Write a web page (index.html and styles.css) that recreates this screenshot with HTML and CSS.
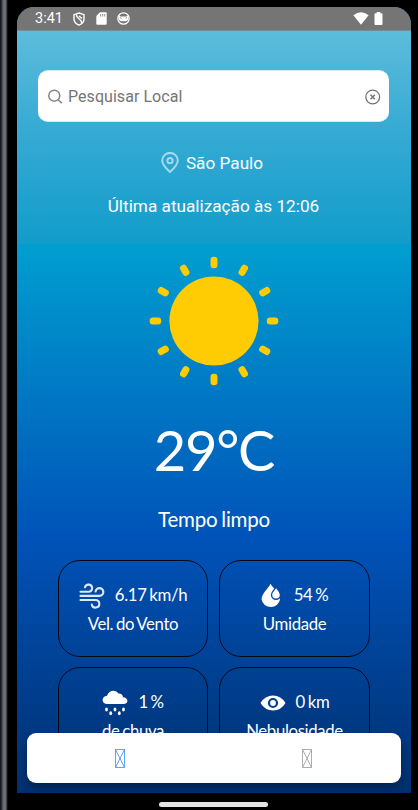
FILE: index.html
```html
<!DOCTYPE html>
<html lang="pt-BR">
<head>
<meta charset="utf-8">
<title>Clima</title>
<link rel="stylesheet" href="styles.css">
</head>
<body>
<div class="device">
  <main class="screen">
    <div class="status">
      <span class="clock">3:41</span>
      <svg class="s-shield" width="12" height="14" viewBox="0 0 12 14" fill="none" stroke="#fff" stroke-width="1.4"><path d="M6 1 11 2.7V7c0 3-2 5-5 6.200C3 12 1 10 1 7V2.700z"/><path d="M3.300 2.500c0 4.500 5.400 4 5.400 8.500M6 4l3 2.500"/></svg>
      <svg class="s-card" width="11" height="13" viewBox="0 0 11 13"><path fill="#fff" d="M4 .3h5.700q1 0 1 1v10.400q0 1-1 1H1.300q-1 0-1-1V4z"/><path stroke="#757575" stroke-width=".8" d="M4.700 2v2.500M6.700 2v2.500M8.700 2v2.500"/></svg>
      <svg class="s-face" width="13" height="13" viewBox="0 0 13 13"><circle cx="6.500" cy="6.500" r="5.700" fill="none" stroke="#fff" stroke-width="1.200"/><path fill="#fff" d="M1.800 3.200 3.500 4.500h6l1.700-1.300.3 3.800c-.5 1.500-2 2.300-5 2.300s-4.500-.8-5-2.300z"/><path stroke="#757575" stroke-width=".8" d="M3 5.500l1.500.8M10 5.500l-1.500.8"/></svg>
      <span class="grow"></span>
      <svg width="16" height="13" viewBox="0 0 16 13"><path fill="#fff" d="M.4 3.300Q8-2.600 15.600 3.300L8 12.700z"/></svg>
      <svg class="s-batt" width="9" height="13" viewBox="0 0 9 13"><path fill="#fff" d="M2.700 0h3.600v1.200H7.500q1 0 1 1V12q0 1-1 1h-6q-1 0-1-1V2.200q0-1 1-1h1.200z"/></svg>
    </div>
    <header class="top">
      <div class="search">
        <svg width="15" height="15" viewBox="0 0 15 15" fill="none" stroke="#858585" stroke-width="1.500"><circle cx="6.300" cy="6.700" r="5.500"/><path d="m10.300 10.700 3.400 3.400"/></svg>
        <span class="placeholder">Pesquisar Local</span>
        <svg width="16" height="16" viewBox="0 0 16 16" fill="none" stroke="#757575" stroke-width="1.300"><circle cx="7.700" cy="8" r="6.900"/><path stroke-width="1.500" d="m5.500 5.800 4.400 4.400m0-4.400-4.400 4.400"/></svg>
      </div>
      <div class="place">
        <svg width="18" height="22" viewBox="0 0 18 22" fill="none" stroke="#a5d9ec" stroke-width="2"><path d="M9 20C4 15.300 1.200 12 1.200 8.400a7.800 7.500 0 0 1 15.600 0C16.800 12 14 15.300 9 20z"/><circle cx="9" cy="8.700" r="2.600"/></svg>
        <span>São Paulo</span>
      </div>
      <div class="updated">Última atualização às 12:06</div>
    </header>
    <section class="now">
      <svg class="sun" width="130" height="130" viewBox="-65 -65 130 130" fill="#ffcc03">
        <defs><rect id="ray" x="-3.500" y="-64.300" width="7" height="11.500" rx="3.200"/></defs>
        <circle r="44.600"/>
        <use href="#ray"/><use href="#ray" transform="rotate(30)"/><use href="#ray" transform="rotate(60)"/><use href="#ray" transform="rotate(90)"/><use href="#ray" transform="rotate(120)"/><use href="#ray" transform="rotate(150)"/><use href="#ray" transform="rotate(180)"/><use href="#ray" transform="rotate(210)"/><use href="#ray" transform="rotate(240)"/><use href="#ray" transform="rotate(270)"/><use href="#ray" transform="rotate(300)"/><use href="#ray" transform="rotate(330)"/>
      </svg>
      <div class="temp">29°C</div>
      <div class="desc">Tempo limpo</div>
    </section>
    <section class="cards">
      <div class="card">
        <div class="line wind">
          <svg width="26" height="26" viewBox="0 0 26 26" fill="none" stroke="#dce9f8" stroke-width="2.100" stroke-linecap="round"><path d="M1.500 8.800H9.500a3.600 3.600 0 1 0-3.500-4.500M1.500 12.900h19a3.900 3.900 0 1 0-3.900-4.500M1.500 17H16.500a3.800 3.800 0 1 1-3.700 4.500"/></svg>
          <span>6.17 km/h</span>
        </div>
        <div class="label">Vel. do Vento</div>
      </div>
      <div class="card">
        <div class="line drop">
          <svg width="20" height="26" viewBox="0 0 20 26"><path fill="#fff" d="M9.500.8C12 5 19 11 19 16.500a9.300 8.800 0 0 1-18.400 0C.6 10.500 7 6 9.500.8z"/><path fill="#fff" stroke="#004daf" stroke-width="1.400" d="M15 4.200c1.500 2.200 4.500 4.300 4.500 7.500a4.500 4.500 0 0 1-9 0c0-3 3-5 4.500-7.500z"/></svg>
          <span>54 %</span>
        </div>
        <div class="label">Umidade</div>
      </div>
      <div class="card">
        <div class="line rain">
          <svg width="26" height="26" viewBox="0 0 26 26" fill="#fff"><path d="M5.500 14C-1 14-1 6.500 5 5.700 7-.3 14-.5 16.300 3.500c3-.2 4.500 1.500 4.700 3.800 5.500.2 6 6.700.5 6.700z"/><g><ellipse cx="4.500" cy="19.500" rx="1.400" ry="2"/><ellipse cx="13" cy="19.500" rx="1.400" ry="2"/><ellipse cx="21.500" cy="19.500" rx="1.400" ry="2"/><ellipse cx="8.700" cy="23.300" rx="1.400" ry="2"/><ellipse cx="17.300" cy="23.300" rx="1.400" ry="2"/></g></svg>
          <span>1 %</span>
        </div>
        <div class="label">de chuva</div>
      </div>
      <div class="card">
        <div class="line eye">
          <svg width="26" height="16" viewBox="0 0 26 16"><path fill="#fff" d="M.5 8Q5 .5 13 .5T25.500 8Q21 15.500 13 15.500T.5 8z"/><circle cx="13" cy="8" r="4" fill="#fff" stroke="#00428f" stroke-width="2.200"/></svg>
          <span>0 km</span>
        </div>
        <div class="label">Nebulosidade</div>
      </div>
    </section>
    <nav class="tabs">
      <a class="tab active"><svg width="10" height="19" viewBox="0 0 10 19" fill="none" stroke="currentColor" stroke-width=".8"><path d="M.5.500h9v18h-9zL9.500 18.500M9.500.500l-9 18"/></svg></a>
      <a class="tab"><svg width="10" height="19" viewBox="0 0 10 19" fill="none" stroke="currentColor" stroke-width=".8"><path d="M.5.500h9v18h-9zL9.500 18.500M9.500.500l-9 18"/></svg></a>
    </nav>
  </main>
  <div class="home"></div>
</div>
</body>
</html>
```
FILE: styles.css
```css
* { box-sizing: border-box; }
body { margin: 0; background: #000; font-family: Roboto, sans-serif; color: #fff; overflow: hidden; }
svg { display: block; flex: none; }
.device {
  width: 418px; height: 810px; padding: 7px 7px 0 17px; overflow: hidden;
  background: linear-gradient(90deg, #17181b 0 1px, #42454b 2px, #73767e 4px, #62656c 6px, #202124 7px, #000 8px);
}
.screen {
  position: relative; height: 786px; overflow: hidden; border-radius: 17px 17px 0 0;
  background: linear-gradient(180deg, #009fd0 237px, #0052b8 534px, #003070 786px);
}
.status { display: flex; align-items: center; height: 24px; padding: 0 28px 0 18px; background: #757575; border-bottom: 1px solid #6f8e99; }
.clock { width: 38px; font-size: 14.5px; line-height: 24px; padding-top: 1px; }
.s-card { margin-left: 11px; }
.s-face { margin-left: 10px; }
.grow { flex: 1; }
.s-batt { margin-left: 5px; }
.top { height: 213px; padding: 39px 22px 0 21px; background: linear-gradient(180deg, #5dbcdb, #37abd4 45%, #129cca); }
.search { display: flex; align-items: center; height: 52px; padding: 1px 8px 0 10px; border-radius: 10px; background: #fff; border: 1px solid #d2ebf5; border-width: 1px 0; }
.placeholder { flex: 1; margin-left: 5px; font-size: 16px; letter-spacing: .05px; color: #757575; }
.place { display: flex; align-items: center; justify-content: center; height: 22px; gap: 7px; margin: 30px 3px 0 0; font-size: 17.2px; }
.updated { margin-top: 20px; text-align: center; font-size: 17.2px; line-height: 24px; }
.now { display: flex; flex-direction: column; align-items: center; height: 316px; padding-top: 12px; font-family: Lato, sans-serif; }
.temp { margin-top: 29px; font-size: 56px; line-height: 70px; letter-spacing: -1.3px; }
.desc { margin-top: 19px; font-size: 20.5px; line-height: 30px; letter-spacing: -.2px; word-spacing: -1.2px; }
.cards { display: grid; grid-template-columns: 150px 151px; grid-auto-rows: 97px; gap: 10px 11px; padding-left: 41px; font-family: Lato, sans-serif; font-size: 16.8px; letter-spacing: -.35px; word-spacing: -1.2px; }
.card { border: 1px solid #000818; border-radius: 22px; padding-top: 20px; }
.line { display: flex; align-items: center; justify-content: center; height: 30px; gap: 10px; }
.line span { padding-bottom: 3px; }
.drop { gap: 13px; }
.label { text-align: center; line-height: 26px; }
.tabs { position: absolute; left: 9.500px; right: 10px; bottom: 10px; height: 50px; display: flex; border-radius: 9px; background: #fff; box-shadow: 0 5px 10px rgba(0, 0, 0, .28); }
.tab { flex: 1; display: flex; align-items: center; justify-content: center; padding-top: 1px; color: #999; }
.active { color: #3b8cf5; }
.home { width: 109px; height: 5px; margin: 9px auto 0 142px; border-radius: 3px; background: #e4e4e4; }
```
